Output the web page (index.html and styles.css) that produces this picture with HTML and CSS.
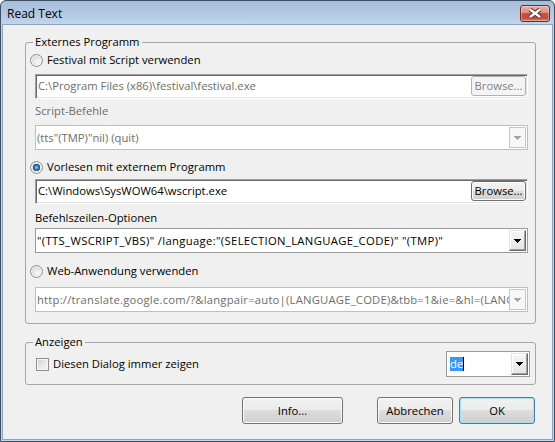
FILE: index.html
```html
<!DOCTYPE html>
<html lang="de">
<head>
<meta charset="utf-8">
<title>Read Text</title>
<link rel="stylesheet" href="styles.css">
</head>
<body>
<div class="window">
  <div class="titlebar">
    <span class="title">Read Text</span>
    <span class="close">
      <svg width="28" height="15" viewBox="0 0 28 15">
        <path d="M9 3.5 L19 11 M19 3.5 L9 11" stroke="#5b2a23" stroke-width="4.4" fill="none"/>
        <path d="M9 3.5 L19 11 M19 3.5 L9 11" stroke="#ffffff" stroke-width="2.4" fill="none"/>
      </svg>
    </span>
  </div>
  <div class="client">
    <fieldset class="group group-ext">
      <legend>Externes Programm</legend>
      <div class="opt"><span class="radio"></span><span>Festival mit Script verwenden</span></div>
      <div class="edit is-disabled edit-1">
        <span class="edit-text">C:\Program Files (x86)\festival\festival.exe</span>
        <span class="browse">Browse...</span>
      </div>
      <div class="caption is-disabled cap-1">Script-Befehle</div>
      <div class="combo is-disabled combo-1">
        <span class="combo-text">(tts"(TMP)"nil) (quit)</span>
        <span class="drop"><svg class="arrow" width="7" height="4" viewBox="0 0 7 4"><path d="M0 0H7V1H6V2H5V3H4V4H3V3H2V2H1V1H0Z"/></svg></span>
      </div>
      <div class="opt opt-2"><span class="radio is-checked"></span><span>Vorlesen mit externem Programm</span></div>
      <div class="edit edit-2">
        <span class="edit-text">C:\Windows\SysWOW64\wscript.exe</span>
        <span class="browse">Browse...</span>
      </div>
      <div class="caption cap-2">Befehlszeilen-Optionen</div>
      <div class="combo combo-2">
        <span class="combo-text caps-wide">"(TTS_WSCRIPT_VBS)" /language:"(SELECTION_LANGUAGE_CODE)" "(TMP)"</span>
        <span class="drop"><svg class="arrow" width="7" height="4" viewBox="0 0 7 4"><path d="M0 0H7V1H6V2H5V3H4V4H3V3H2V2H1V1H0Z"/></svg></span>
      </div>
      <div class="opt opt-3"><span class="radio"></span><span>Web-Anwendung verwenden</span></div>
      <div class="combo is-disabled combo-3">
        <span class="combo-text url-wide">http://translate.google.com/?&amp;langpair=auto|(LANGUAGE_CODE)&amp;tbb=1&amp;ie=&amp;hl=(LANGUAGE_CODE)</span>
        <span class="drop"><svg class="arrow" width="7" height="4" viewBox="0 0 7 4"><path d="M0 0H7V1H6V2H5V3H4V4H3V3H2V2H1V1H0Z"/></svg></span>
      </div>
    </fieldset>
    <fieldset class="group group-show">
      <legend>Anzeigen</legend>
      <div class="show-row">
        <div class="check-opt"><span class="checkbox"></span><span>Diesen Dialog immer zeigen</span></div>
        <div class="combo combo-lang">
          <span class="combo-text"><span class="sel">de</span><span class="caret"></span></span>
          <span class="drop"><svg class="arrow" width="7" height="4" viewBox="0 0 7 4"><path d="M0 0H7V1H6V2H5V3H4V4H3V3H2V2H1V1H0Z"/></svg></span>
        </div>
      </div>
    </fieldset>
    <div class="buttons">
      <button class="btn btn-info">Info...</button>
      <button class="btn btn-cancel">Abbrechen</button>
      <button class="btn btn-ok">OK</button>
    </div>
  </div>
</div>
</body>
</html>
```

FILE: styles.css
```css
* { box-sizing: border-box; }
html, body { margin: 0; padding: 0; }
body {
  width: 555px; height: 442px; overflow: hidden; background: #ffffff;
  font-family: "Open Sans", "Noto Sans", sans-serif;
  font-size: 11.25px; line-height: 16px; color: #000;
}
.window {
  width: 555px; height: 442px;
  display: flex; flex-direction: column;
  border: 1px solid #3f4f63; border-radius: 6px 6px 0 0;
  padding: 0 2px 2px;
  background: linear-gradient(#a5bcda 0, #b9cee7 18px, #c3d6ec 24px, #c3d6ec 100%);
}
.titlebar {
  height: 24px; flex: none;
  display: flex; align-items: flex-start; justify-content: space-between;
  padding: 0 2px 0 4px;
}
.title { margin-top: 5px; font-size: 12px; line-height: 16px; }
.close {
  margin-top: 4px; width: 30px; height: 17px;
  border: 1px solid #6b2a22; border-radius: 3px;
  background: linear-gradient(#eab0a3 0%, #dc8e7f 45%, #c9513f 50%, #c44b39 80%, #d9806f 100%);
  box-shadow: inset 0 0 0 1px rgba(255,255,255,0.35);
  display: flex; align-items: center; justify-content: center;
}
.close svg { display: block; }
.client {
  flex: 1; background: #f0f0f0;
  display: flex; flex-direction: column;
  padding: 9px 16px 0 22px;
  box-shadow: 0 0 0 1px #8da3bf;
}

/* group boxes */
.group {
  margin: 0; min-width: 0;
  padding: 0 7px 11px 4px;
  border: 1px solid #a6a6a6; border-radius: 3px;
}
.group legend { margin-left: 3px; padding: 0 2px; line-height: 16px; }
.group-show { margin-top: 10px; padding: 0 5px 6px 4px; }

.is-disabled { color: #6d6d6d; }

/* radio rows */
.opt { height: 20px; display: flex; align-items: center; gap: 4px; white-space: nowrap; }
.opt-2 { margin-top: 7px; }
.opt-3 { margin-top: 8px; }
.radio {
  flex: none; width: 13px; height: 13px; border-radius: 50%;
  border: 1px solid #8f8f8f;
  background: radial-gradient(circle at 62% 65%, #fbfbfb 0, #eaeaea 35%, #cdcdcd 100%);
  box-shadow: inset 0 0 0 1px #f3f3f3;
}
.radio.is-checked {
  background:
    radial-gradient(circle at 50% 50%, #9ad8fa 0, #3d8fd0 1.6px, #1d5a9a 3px, #2c5f93 3.5px, rgba(255,255,255,0) 4px),
    radial-gradient(circle at 62% 65%, #fbfbfb 0, #eaeaea 35%, #cdcdcd 100%);
}

/* edit with browse button */
.edit {
  height: 25px; margin-left: 5px;
  display: flex; align-items: flex-start;
  background: #fff;
  border-style: solid; border-width: 1px;
  border-color: #a0a0a0 #ffffff #ffffff #a0a0a0;
  box-shadow: inset 1px 1px 0 #696969, inset -1px -1px 0 #e3e3e3;
  padding: 1px 1px 0 1px;
}
.edit-1 { margin-top: 4px; }
.edit-2 { margin-top: 2px; }
.edit-text { flex: 1; min-width: 0; line-height: 20px; white-space: nowrap; overflow: hidden; padding-left: 1px; }
.browse {
  flex: none; width: 55px; height: 20px; margin-top: 0;
  border: 1px solid #707070; border-radius: 3px;
  background: linear-gradient(#f2f2f2 0, #ebebeb 50%, #dddddd 50%, #cfcfcf 100%);
  box-shadow: inset 0 0 0 1px #fcfcfc;
  text-align: center; line-height: 18px; color: #000;
}
.edit.is-disabled .browse {
  border-color: #adb2b5; background: #f4f4f4; box-shadow: none; color: #838383;
}
.edit.is-disabled .edit-text { color: #6d6d6d; }

/* captions */
.caption { height: 16px; margin-left: 5px; white-space: nowrap; }
.cap-1 { margin-top: 4px; }
.cap-2 { margin-top: 6px; }

/* combos */
.combo {
  height: 25px; margin-left: 5px;
  display: flex; align-items: stretch;
  background: #fff; border: 1px solid #9a9a9a; padding: 1px;
}
.combo-1 { margin-top: 6px; }
.combo-2 { margin-top: 2px; }
.combo-3 { margin-top: 6px; }
.combo-text { flex: 1; min-width: 0; line-height: 21px; white-space: nowrap; overflow: hidden; }
.caps-wide { letter-spacing: 0.35px; }
.url-wide { letter-spacing: 0.22px; }
.drop {
  flex: none; width: 17px;
  display: flex; align-items: center; justify-content: center;
  border-style: solid; border-width: 1px;
  border-color: #e3e3e3 #696969 #696969 #e3e3e3;
  background: linear-gradient(#f6f6f6, #e4e4e4);
  box-shadow: inset -1px -1px 0 #a0a0a0, inset 1px 1px 0 #ffffff;
}
.arrow { display: block; fill: #000; }
.combo.is-disabled { border-color: #b5c1cf; }
.combo.is-disabled .drop {
  border-color: #c6c6c6; background: #f7f7f7; box-shadow: none;
}
.combo.is-disabled .arrow { fill: #a3a3a3; }
.combo.is-disabled .combo-text { color: #6d6d6d; }

/* Anzeigen row */
.show-row { height: 28px; display: flex; align-items: center; justify-content: space-between; }
.check-opt { display: flex; align-items: center; gap: 4px; margin-left: 6px; white-space: nowrap; }
.checkbox {
  flex: none; width: 13px; height: 13px;
  border: 1px solid #8f8f8f;
  background: linear-gradient(135deg, #cfcfcf 0%, #e9e9e9 55%, #f7f7f7 100%);
  box-shadow: inset 0 0 0 1px #f4f4f4;
}
.combo-lang { width: 84px; height: 26px; margin-left: 0; }
.combo-lang .combo-text { padding-left: 2px; line-height: 22px; display: flex; align-items: center; }
.sel { background: #3399ff; color: #fff; line-height: 14px; height: 14px; display: inline-block; }
.caret { display: inline-block; width: 1px; height: 14px; background: #000; }

/* bottom buttons */
.buttons { display: flex; justify-content: flex-end; margin-top: 12px; padding-right: 1px; }
.btn {
  height: 27px; margin: 0; padding: 0;
  font: inherit; color: #000;
  border: 1px solid #707070; border-radius: 3px;
  background: linear-gradient(#f2f2f2 0, #ebebeb 50%, #dddddd 50%, #cfcfcf 100%);
  box-shadow: inset 0 0 0 1px #fcfcfc;
}
.btn-info { width: 101px; margin-right: 34px; }
.btn-cancel { width: 76px; margin-right: 6px; }
.btn-ok { width: 76px; border-color: #3c7fb1; box-shadow: inset 0 0 0 1px #a3e1f7; }
```
